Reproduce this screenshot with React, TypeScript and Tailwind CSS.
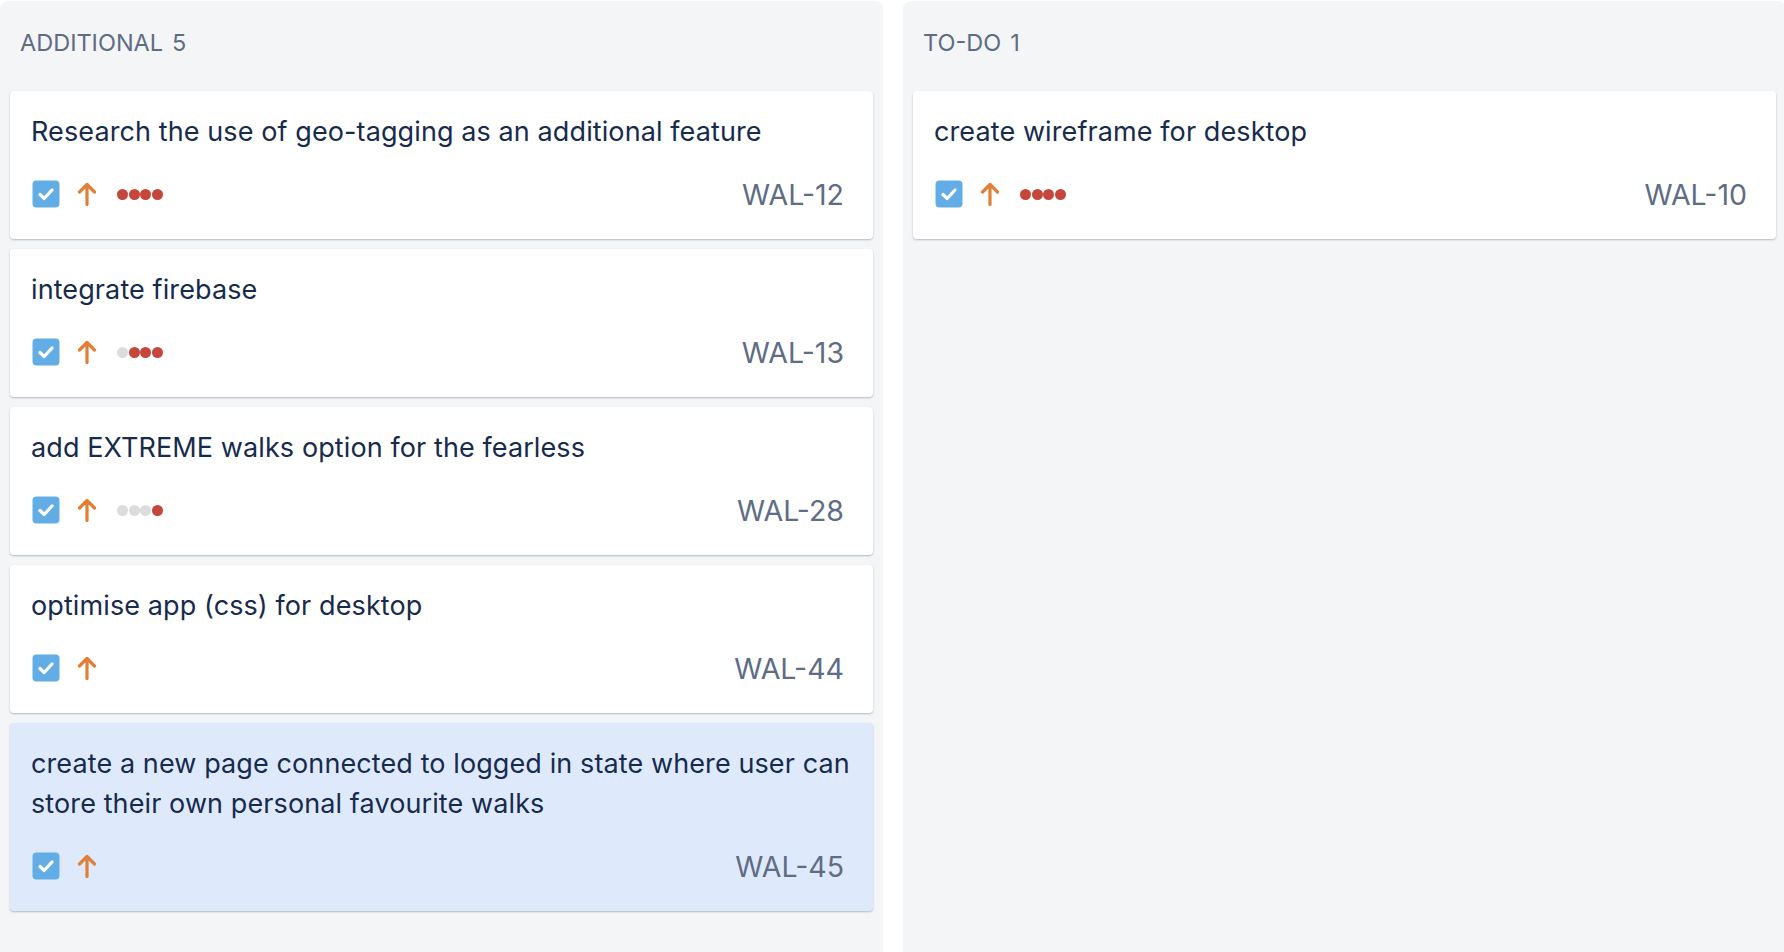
import React from "react";

type Card = {
  title: string;
  id: string;
  dots: number | null; // number of red dots out of 4 (from right), null = no dots
  selected?: boolean;
};

const additional: Card[] = [
  { title: "Research the use of geo-tagging as an additional feature", id: "WAL-12", dots: 4 },
  { title: "integrate firebase", id: "WAL-13", dots: 3 },
  { title: "add EXTREME walks option for the fearless", id: "WAL-28", dots: 1 },
  { title: "optimise app (css) for desktop", id: "WAL-44", dots: null },
  {
    title: "create a new page connected to logged in state where user can store their own personal favourite walks",
    id: "WAL-45",
    dots: null,
    selected: true,
  },
];

const todo: Card[] = [{ title: "create wireframe for desktop", id: "WAL-10", dots: 4 }];

function CheckIcon() {
  return (
    <svg width="28" height="28" viewBox="0 0 28 28" className="shrink-0">
      <rect x="0.5" y="0.5" width="27" height="27" rx="4" fill="#63ade6" />
      <path d="M8 14.5 L12.2 18.5 L20 10" fill="none" stroke="#fff" strokeWidth="3.2" strokeLinecap="round" strokeLinejoin="round" />
    </svg>
  );
}

function ArrowUp() {
  return (
    <svg width="20" height="24" viewBox="0 0 20 24" className="shrink-0">
      <path d="M10 22.5 V2.5 M2.5 10 L10 2.5 L17.5 10" fill="none" stroke="#e17f36" strokeWidth="3.2" strokeLinecap="round" strokeLinejoin="round" />
    </svg>
  );
}

function Dots({ red }: { red: number }) {
  const items = [0, 1, 2, 3];
  return (
    <div className="flex items-center gap-[0.7px]">
      {items.map((i) => (
        <span
          key={i}
          className={
            i >= 4 - red
              ? "block w-[11px] h-[11px] rounded-full bg-[#c5463a]"
              : "block w-[11px] h-[11px] rounded-full bg-[#dcdcdc]"
          }
        />
      ))}
    </div>
  );
}

function IssueCard({ card }: { card: Card }) {
  return (
    <div
      className={
        (card.selected ? "bg-[#deeafc] " : "bg-white ") +
        "rounded-[4px] shadow-[0_1px_2px_rgba(9,30,66,0.28)] pt-[21px] pb-[31px] pl-[21px] pr-[29px]"
      }
    >
      <div className="text-[27px] leading-[40px] tracking-[0.1px] text-[#172b4d] -mr-[14px]">{card.title}</div>
      <div className="mt-[28px] h-[28px] flex items-center">
        <div className="pl-[1px]">
          <CheckIcon />
        </div>
        <div className="ml-[17px]">
          <ArrowUp />
        </div>
        {card.dots !== null && (
          <div className="ml-[20px]">
            <Dots red={card.dots} />
          </div>
        )}
        <div className="ml-auto text-[28.5px] leading-[28px] text-[#5e6c84] translate-y-[1px]">{card.id}</div>
      </div>
    </div>
  );
}

function Column({ title, count, cards }: { title: string; count: number; cards: Card[] }) {
  return (
    <div className="w-[883px] shrink-0 bg-[#f4f5f7] rounded-t-[8px] mt-[1px] px-[10px] min-h-[951px]">
      <div className="h-[90px] pl-[10px] pt-[27px] text-[23.5px] leading-[30px] text-[#5e6c84]">
        {title}
        <span className="ml-[9px]">{count}</span>
      </div>
      <div className="flex flex-col gap-[10px]">
        {cards.map((c) => (
          <IssueCard key={c.id} card={c} />
        ))}
      </div>
    </div>
  );
}

export default function App() {
  return (
    <div
      className="w-[1784px] h-[952px] overflow-hidden bg-white flex gap-[20px]"
      style={{ fontFamily: "Inter, 'Noto Sans', sans-serif" }}
    >
      <Column title="ADDITIONAL" count={5} cards={additional} />
      <Column title="TO-DO" count={1} cards={todo} />
    </div>
  );
}
